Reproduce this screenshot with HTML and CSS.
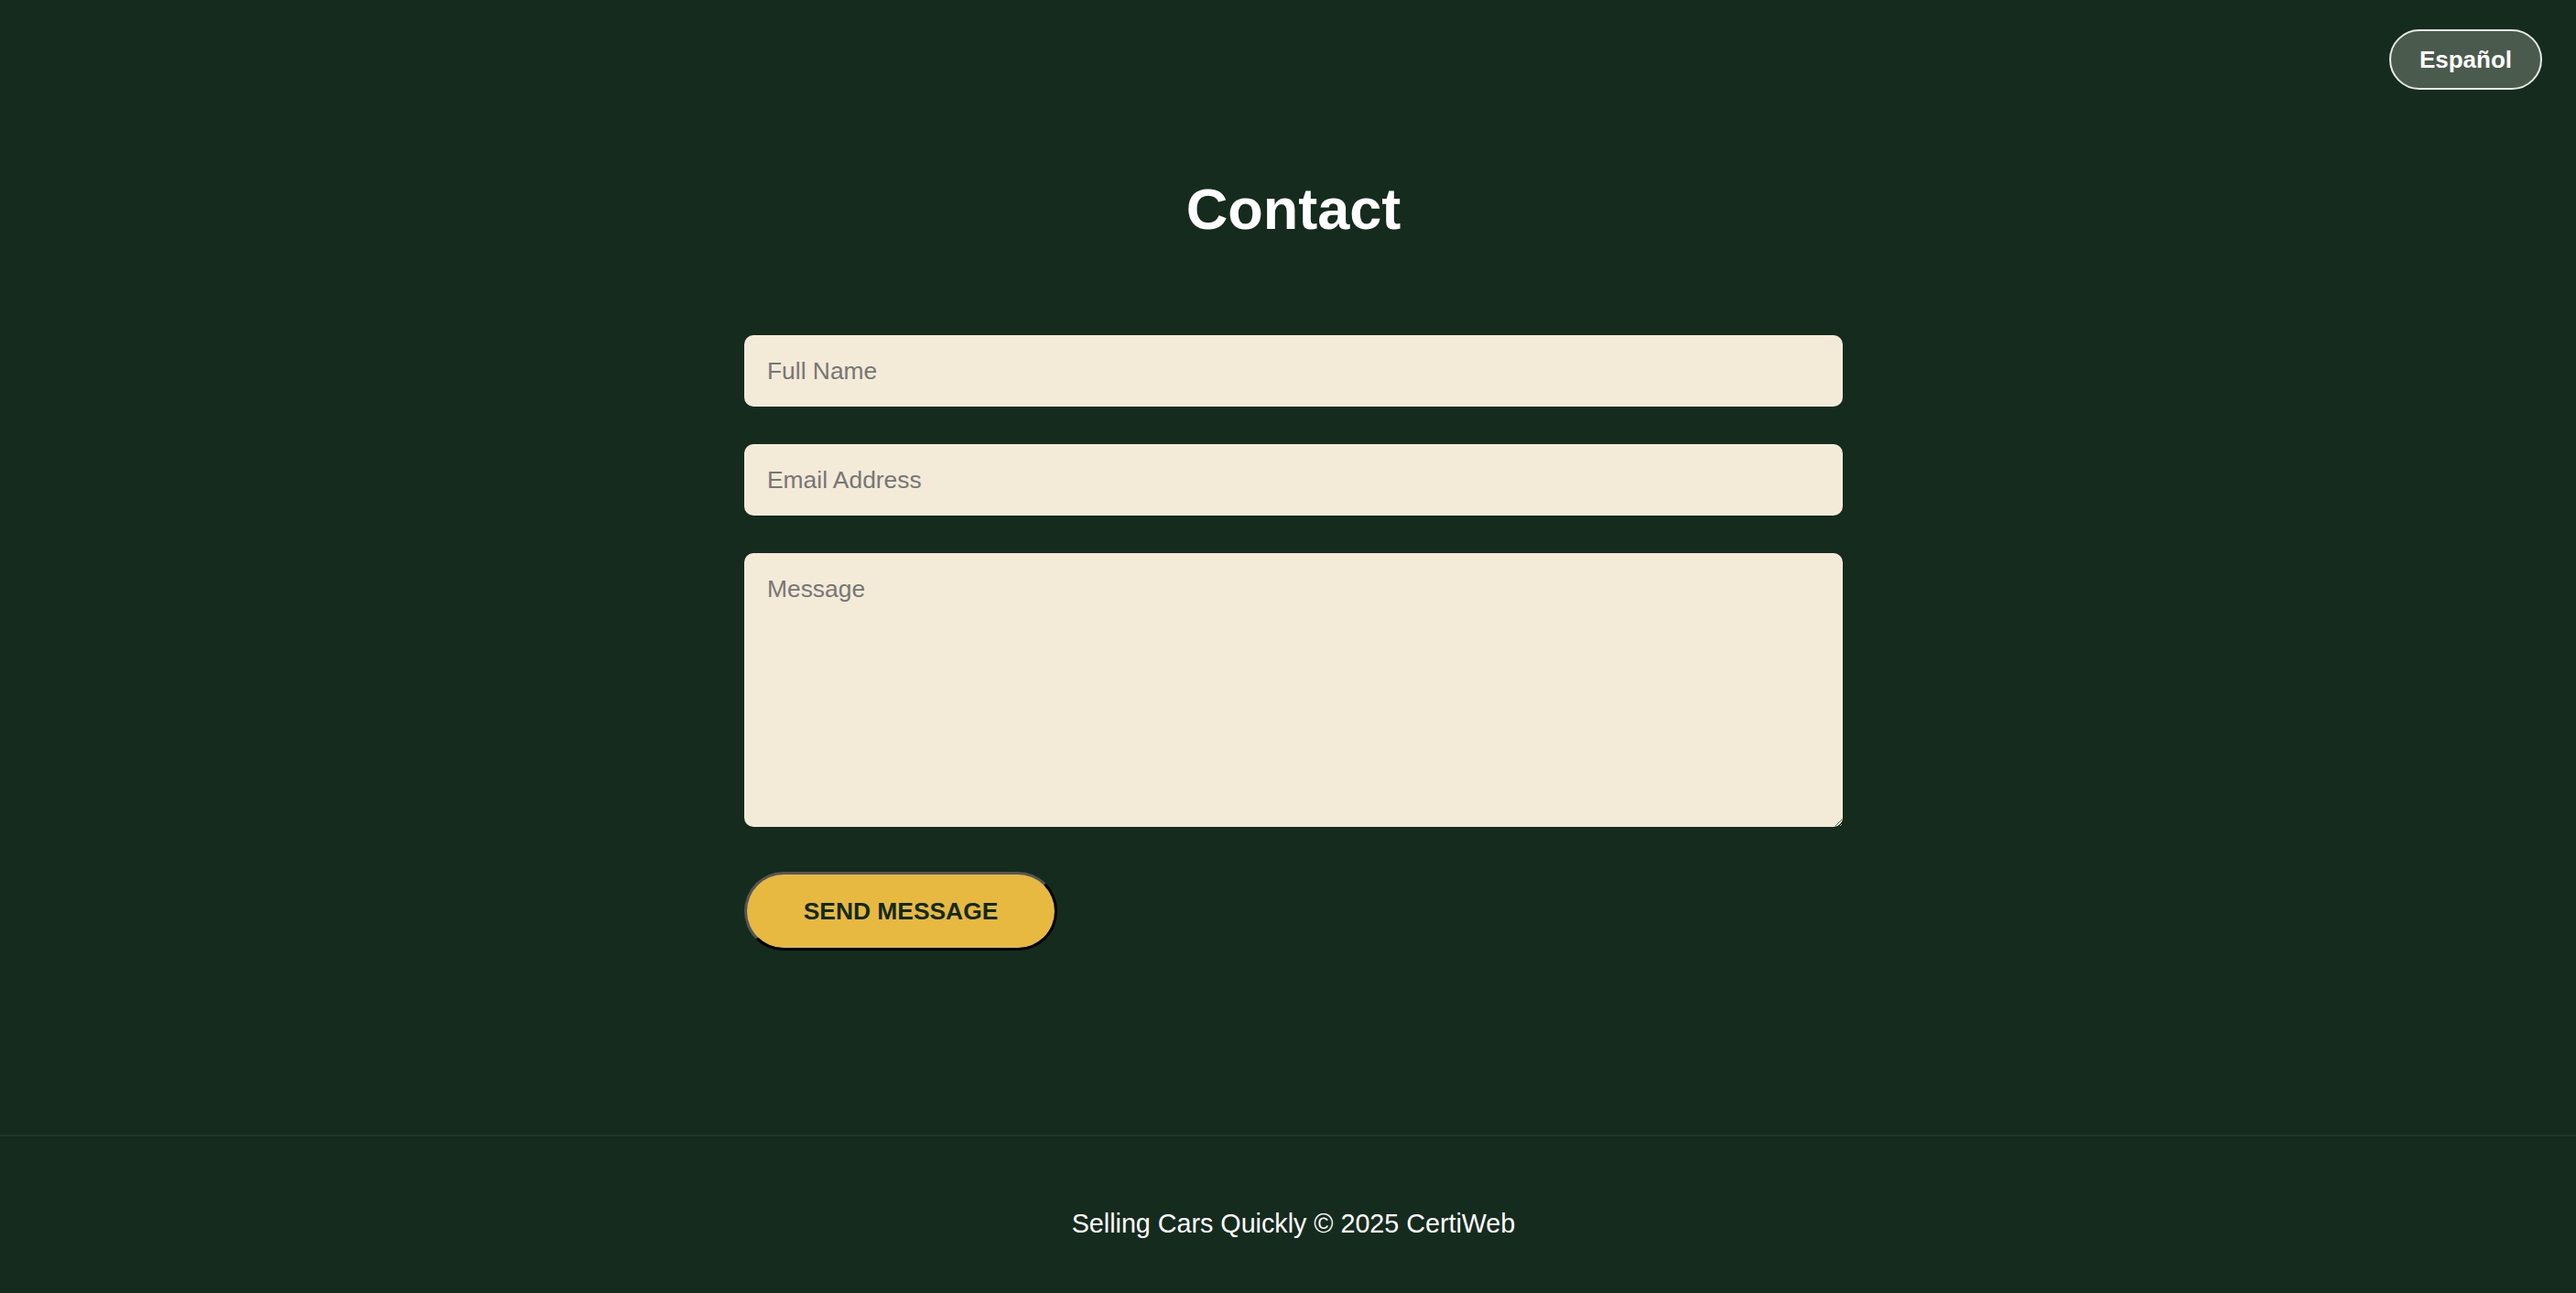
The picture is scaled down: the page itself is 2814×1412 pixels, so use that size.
FILE: index.html
```html
<!DOCTYPE html>
<html lang="en">
<head>
<meta charset="utf-8">
<title>Contact - CertiWeb</title>
<link rel="stylesheet" href="styles.css">
</head>
<body>
<div class="page">
  <header class="topbar">
    <button class="lang-btn" type="button">Español</button>
  </header>
  <main class="main">
    <h1 class="title">Contact</h1>
    <form class="contact-form">
      <input class="field" type="text" placeholder="Full Name">
      <input class="field" type="email" placeholder="Email Address">
      <textarea class="field area" placeholder="Message"></textarea>
      <div class="actions">
        <button class="send-btn" type="button">Send Message</button>
      </div>
    </form>
  </main>
  <footer class="footer">
    <p class="footer-text">Selling Cars Quickly © 2025 CertiWeb</p>
  </footer>
</div>
</body>
</html>
```

FILE: styles.css
```css
html, body {
  margin: 0;
  padding: 0;
  background: #142b1d;
}
body {
  font-family: "Liberation Sans", Arial, sans-serif;
  color: #ffffff;
}
.page {
  min-height: 100vh;
  display: flex;
  flex-direction: column;
}
.topbar {
  display: flex;
  justify-content: flex-end;
  padding: 32px 37px 0 0;
}
.lang-btn {
  font-family: "Liberation Sans", Arial, sans-serif;
  font-weight: 700;
  font-size: 26px;
  color: #ffffff;
  background: #4a5b4d;
  border: 2px solid #e6e9e6;
  border-radius: 33px;
  height: 66px;
  width: 167px;
  padding: 0;
  line-height: 1;
}
.main {
  flex: 1;
  display: flex;
  flex-direction: column;
  align-items: center;
  padding-left: 12px;
}
.title {
  margin: 94px 0 0;
  font-size: 63px;
  font-weight: 700;
  line-height: 72px;
  color: #ffffff;
}
.contact-form {
  width: 1200px;
  margin-top: 102px;
  display: flex;
  flex-direction: column;
  gap: 41px;
}
.field {
  box-sizing: border-box;
  width: 100%;
  height: 78px;
  border: none;
  border-radius: 10px;
  background: #f4ead8;
  padding: 0 25px;
  font-family: "Liberation Sans", Arial, sans-serif;
  font-size: 26.4px;
  color: #333333;
  outline: none;
}
.field::placeholder {
  color: #767676;
}
.area {
  height: 299px;
  padding: 24px 25px;
  resize: both;
  display: block;
}
.actions {
  margin-top: 8px;
}
.send-btn {
  font-family: "Liberation Sans", Arial, sans-serif;
  font-weight: 700;
  font-size: 26.4px;
  text-transform: uppercase;
  color: #13291c;
  background: #e8b941;
  border-style: solid;
  border-width: 3px;
  border-color: #555555 #000000 #000000 #555555;
  border-radius: 43px;
  height: 86px;
  width: 342px;
  padding: 0;
  line-height: 1;
}
.footer {
  border-top: 2px solid #22352a;
  padding: 79px 0 59px 12px;
  text-align: center;
}
.footer-text {
  margin: 0;
  font-size: 28.7px;
  line-height: 33px;
  color: #ffffff;
}
```
